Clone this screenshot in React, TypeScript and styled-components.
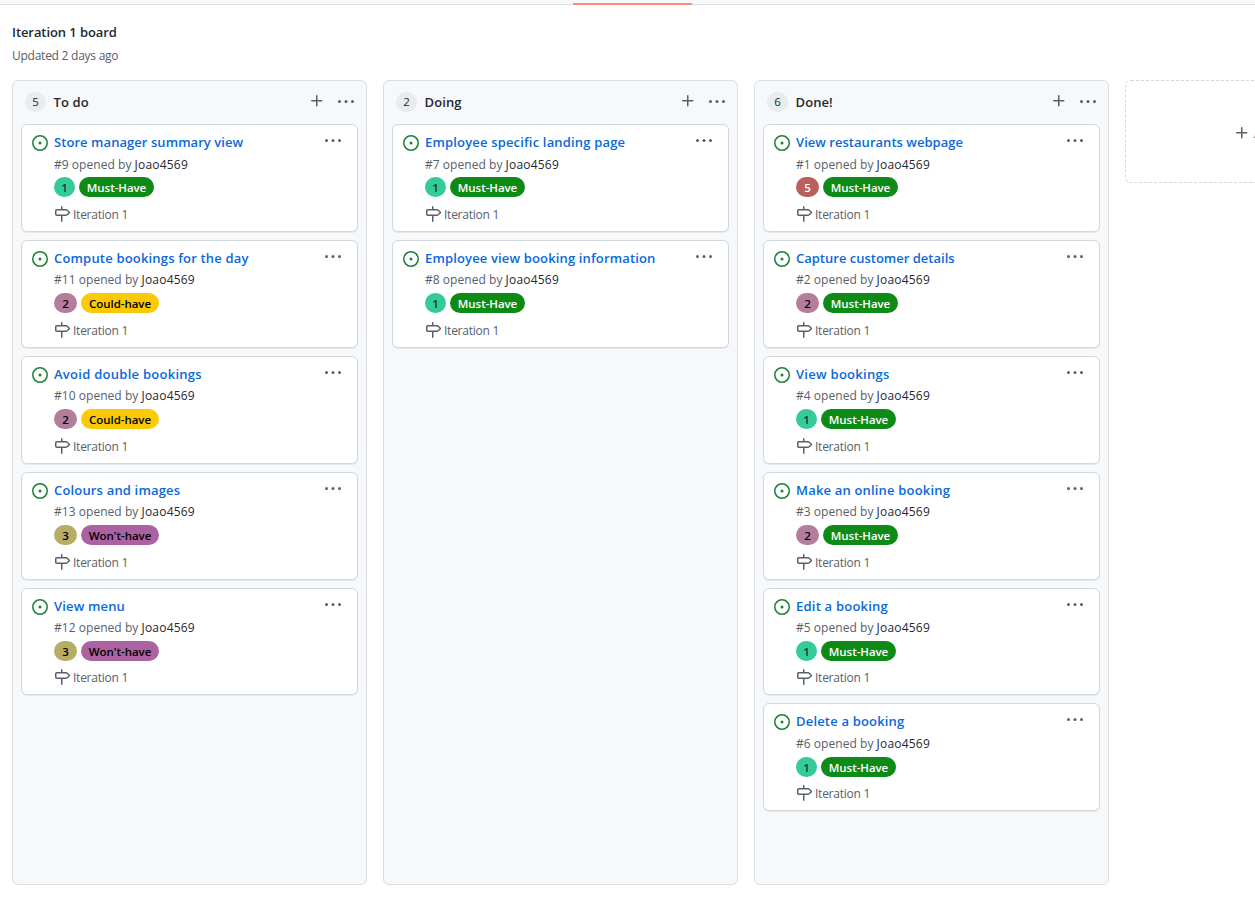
import React from "react";
import styled, { createGlobalStyle } from "styled-components";

const GlobalStyle = createGlobalStyle`
  * { box-sizing: border-box; }
  body {
    margin: 0;
    overflow: hidden;
    background: #fff;
    color: #24292f;
    font-family: "Open Sans", "Noto Sans", sans-serif;
  }
`;

const Page = styled.div`
  height: 899px;
  overflow: hidden;
  display: flex;
  flex-direction: column;
`;

const TabStrip = styled.nav`
  flex: none;
  height: 5px;
  padding-left: 573px;
  background: #f6f8fa;
  border-bottom: 1px solid #d8dee4;
`;

const ActiveTab = styled.div`
  width: 119px;
  height: 5px;
  border-bottom: 2px solid #fd8c73;
`;

const Heading = styled.header`
  flex: none;
  height: 75px;
  padding: 17px 12px 0;
`;

const BoardName = styled.h1`
  margin: 0;
  font-size: 13px;
  font-weight: 600;
  line-height: 21px;
  letter-spacing: -0.08px;
`;

const Updated = styled.p`
  margin: 4px 0 0;
  font-size: 12px;
  line-height: 18px;
  letter-spacing: -0.25px;
  color: #57606a;
`;

const Board = styled.main`
  display: flex;
  align-items: flex-start;
  gap: 16px;
  padding-left: 12px;
`;

const ColumnBox = styled.section`
  flex: none;
  width: 355px;
  height: 805px;
  background: #f6f8fa;
  border: 1px solid #d8dee4;
  border-radius: 6px;
`;

const ColumnHeader = styled.header`
  display: flex;
  align-items: flex-start;
  height: 43.2px;
  padding: 11px 12px 0;
`;

const Counter = styled.span`
  flex: none;
  width: 21px;
  height: 20px;
  border-radius: 10px;
  background: #e8ebef;
  font-size: 11.5px;
  line-height: 20px;
  text-align: center;
`;

const ColumnTitle = styled.h2`
  margin: 0 auto 0 7.5px;
  font-size: 13px;
  font-weight: 600;
  line-height: 20px;
  letter-spacing: 0.1px;
`;

const IconButton = styled.button<{ $top: number }>`
  display: flex;
  margin: ${(p) => p.$top}px 0 0 13px;
  padding: 0;
  border: 0;
  background: none;
  color: #57606a;
`;

const CardList = styled.div`
  display: flex;
  flex-direction: column;
  gap: 8px;
  padding: 0 8px;
`;

const CardBox = styled.article`
  display: flex;
  height: 107.85px;
  padding: 8px 16px 0 10px;
  background: #fff;
  border: 1px solid #d0d7de;
  border-radius: 6px;
  box-shadow: 0 1px 0 rgba(140, 149, 159, 0.15);
`;

const StatusIcon = styled.span`
  display: flex;
  flex: none;
  width: 22px;
  height: 16px;
  margin-top: 2px;
  color: #1a7f37;
`;

const CardBody = styled.div`
  flex: 1;
`;

const CardTitle = styled.h3<{ $tracking: number }>`
  margin: 0;
  font-size: 13px;
  font-weight: 600;
  line-height: 18px;
  letter-spacing: ${(p) => p.$tracking}px;
  color: #0969da;
  white-space: nowrap;
`;

const Meta = styled.p`
  margin: 2.35px 0 0;
  font-size: 12px;
  line-height: 22px;
  letter-spacing: 0.04px;
  color: #57606a;
  white-space: nowrap;
`;

const Author = styled.span`
  color: #24292f;
  letter-spacing: 0.2px;
`;

const Labels = styled.div`
  display: flex;
  gap: 4px;
  margin-top: 1.8px;
`;

const Label = styled.span<{ $bg: string; $fg: string; $width: number }>`
  width: ${(p) => p.$width}px;
  height: 20px;
  border-radius: 10px;
  background: ${(p) => p.$bg};
  color: ${(p) => p.$fg};
  font-size: 11.5px;
  font-weight: 600;
  line-height: 21px;
  letter-spacing: -0.05px;
  text-align: center;
  white-space: nowrap;
`;

const Milestone = styled.div`
  display: flex;
  align-items: flex-start;
  gap: 3px;
  height: 18px;
  margin-top: 8.65px;
  font-size: 12px;
  line-height: 18px;
  letter-spacing: -0.25px;
  color: #57606a;
`;

const CardMenu = styled.button`
  display: flex;
  flex: none;
  height: 16px;
  padding: 0;
  border: 0;
  background: none;
  color: #57606a;
`;

const AddColumn = styled.button`
  display: flex;
  flex: none;
  align-items: center;
  gap: 4px;
  width: 355px;
  height: 103px;
  padding: 2px 0 0 108px;
  border: 1px dashed #d0d7de;
  border-radius: 6px;
  background: #fff;
  color: #57606a;
  font: 13px "Open Sans", sans-serif;
  white-space: nowrap;
`;

const Icon = styled.svg.attrs({ width: 16, height: 16, viewBox: "0 0 16 16" })`
  flex: none;
  fill: currentColor;
`;

const PlusIcon = () => (
  <Icon>
    <path d="M7.75 2a.75.75 0 0 1 .75.75V7h4.25a.75.75 0 0 1 0 1.5H8.5v4.25a.75.75 0 0 1-1.5 0V8.5H2.75a.75.75 0 0 1 0-1.5H7V2.75A.75.75 0 0 1 7.75 2Z" />
  </Icon>
);

const KebabIcon = () => (
  <Icon>
    <circle cx="1.5" cy="7.5" r="1.5" />
    <circle cx="8" cy="7.5" r="1.5" />
    <circle cx="14.5" cy="7.5" r="1.5" />
  </Icon>
);

const IssueIcon = () => (
  <Icon>
    <path d="M8 9.5a1.5 1.5 0 1 0 0-3 1.5 1.5 0 0 0 0 3Z" />
    <path d="M8 0a8 8 0 1 1 0 16A8 8 0 0 1 8 0ZM1.5 8a6.5 6.5 0 1 0 13 0 6.5 6.5 0 0 0-13 0Z" />
  </Icon>
);

const MilestoneIcon = () => (
  <Icon>
    <path d="M7.75 0a.75.75 0 0 1 .75.75V3h3.634c.414 0 .814.147 1.13.414l2.07 1.75a1.75 1.75 0 0 1 0 2.672l-2.07 1.75a1.75 1.75 0 0 1-1.13.414H8.5v5.25a.75.75 0 0 1-1.5 0V10H2.75A1.75 1.75 0 0 1 1 8.25v-3.5C1 3.784 1.784 3 2.75 3H7V.75A.75.75 0 0 1 7.75 0Zm4.384 8.5a.25.25 0 0 0 .161-.06l2.07-1.75a.248.248 0 0 0 0-.38l-2.07-1.75a.25.25 0 0 0-.161-.06H2.75a.25.25 0 0 0-.25.25v3.5c0 .138.112.25.25.25h9.384Z" />
  </Icon>
);

type LabelKey = "1" | "2" | "3" | "5" | "Must-Have" | "Could-have" | "Won't-have";

const labelStyles: Record<LabelKey, { bg: string; fg: string; width: number }> = {
  "1": { bg: "#33cc99", fg: "#12382c", width: 21 },
  "2": { bg: "#b37d9b", fg: "#000", width: 23 },
  "3": { bg: "#b7ad65", fg: "#000", width: 23 },
  "5": { bg: "#ba5f5b", fg: "#fff", width: 23 },
  "Must-Have": { bg: "#0e8a16", fg: "#fff", width: 75 },
  "Could-have": { bg: "#fbca04", fg: "#000", width: 78 },
  "Won't-have": { bg: "#ac62a1", fg: "#000", width: 78 },
};

type Issue = { id: number; title: string; tracking: number; labels: LabelKey[] };

const columns: { title: string; issues: Issue[] }[] = [
  {
    title: "To do",
    issues: [
      { id: 9, title: "Store manager summary view", tracking: 0.06, labels: ["1", "Must-Have"] },
      { id: 11, title: "Compute bookings for the day", tracking: 0.18, labels: ["2", "Could-have"] },
      { id: 10, title: "Avoid double bookings", tracking: 0.27, labels: ["2", "Could-have"] },
      { id: 13, title: "Colours and images", tracking: 0.17, labels: ["3", "Won't-have"] },
      { id: 12, title: "View menu", tracking: 0.15, labels: ["3", "Won't-have"] },
    ],
  },
  {
    title: "Doing",
    issues: [
      { id: 7, title: "Employee specific landing page", tracking: 0.17, labels: ["1", "Must-Have"] },
      { id: 8, title: "Employee view booking information", tracking: 0.15, labels: ["1", "Must-Have"] },
    ],
  },
  {
    title: "Done!",
    issues: [
      { id: 1, title: "View restaurants webpage", tracking: 0.03, labels: ["5", "Must-Have"] },
      { id: 2, title: "Capture customer details", tracking: 0, labels: ["2", "Must-Have"] },
      { id: 4, title: "View bookings", tracking: 0.27, labels: ["1", "Must-Have"] },
      { id: 3, title: "Make an online booking", tracking: 0.18, labels: ["2", "Must-Have"] },
      { id: 5, title: "Edit a booking", tracking: 0.22, labels: ["1", "Must-Have"] },
      { id: 6, title: "Delete a booking", tracking: 0.18, labels: ["1", "Must-Have"] },
    ],
  },
];

function Card({ issue }: { issue: Issue }) {
  return (
    <CardBox>
      <StatusIcon>
        <IssueIcon />
      </StatusIcon>
      <CardBody>
        <CardTitle $tracking={issue.tracking}>{issue.title}</CardTitle>
        <Meta>
          #{issue.id} opened by <Author>Joao4569</Author>
        </Meta>
        <Labels>
          {issue.labels.map((name) => {
            const s = labelStyles[name];
            return (
              <Label key={name} $bg={s.bg} $fg={s.fg} $width={s.width}>
                {name}
              </Label>
            );
          })}
        </Labels>
        <Milestone>
          <MilestoneIcon />
          Iteration 1
        </Milestone>
      </CardBody>
      <CardMenu>
        <KebabIcon />
      </CardMenu>
    </CardBox>
  );
}

export default function App() {
  return (
    <Page>
      <GlobalStyle />
      <TabStrip>
        <ActiveTab />
      </TabStrip>
      <Heading>
        <BoardName>Iteration 1 board</BoardName>
        <Updated>Updated 2 days ago</Updated>
      </Heading>
      <Board>
        {columns.map((column) => (
          <ColumnBox key={column.title}>
            <ColumnHeader>
              <Counter>{column.issues.length}</Counter>
              <ColumnTitle>{column.title}</ColumnTitle>
              <IconButton $top={1}>
                <PlusIcon />
              </IconButton>
              <IconButton $top={2}>
                <KebabIcon />
              </IconButton>
            </ColumnHeader>
            <CardList>
              {column.issues.map((issue) => (
                <Card key={issue.id} issue={issue} />
              ))}
            </CardList>
          </ColumnBox>
        ))}
        <AddColumn>
          <PlusIcon />
          Add column
        </AddColumn>
      </Board>
    </Page>
  );
}
